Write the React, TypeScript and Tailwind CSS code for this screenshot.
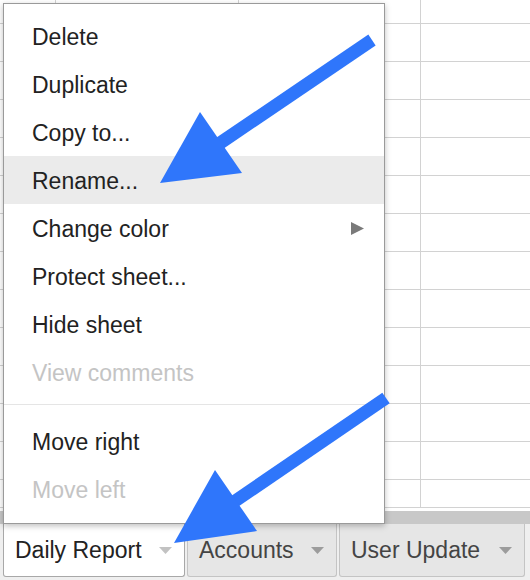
import React from "react";

type MenuItem = {
  label: string;
  disabled?: boolean;
  active?: boolean;
  submenu?: boolean;
};

const topItems: MenuItem[] = [
  { label: "Delete" },
  { label: "Duplicate" },
  { label: "Copy to..." },
  { label: "Rename...", active: true },
  { label: "Change color", submenu: true },
  { label: "Protect sheet..." },
  { label: "Hide sheet" },
  { label: "View comments", disabled: true },
];

const bottomItems: MenuItem[] = [
  { label: "Move right" },
  { label: "Move left", disabled: true },
];

// row heights of the sheet grid behind the menu
const rowHeights = [24, 38, 38, 38, 38, 38, 38, 38, 38, 38, 38, 38, 38, 28];

function Item({ item }: { item: MenuItem }) {
  return (
    <div
      className={`flex h-[48px] items-center justify-between pt-[3px] pl-[28px] pr-[20px] ${
        item.active ? "bg-[#ebebeb]" : ""
      } ${item.disabled ? "text-[#c4c4c4]" : "text-[#222222]"}`}
    >
      <span>{item.label}</span>
      {item.submenu && (
        <svg width="13" height="13" viewBox="0 0 13 13" className="-mt-[2px]">
          <polygon points="0,0 13,6.5 0,13" fill="#7a7a7a" />
        </svg>
      )}
    </div>
  );
}

function Caret({ color }: { color: string }) {
  return (
    <svg width="13" height="7" viewBox="0 0 13 7">
      <polygon points="0,0 13,0 6.5,7" fill={color} />
    </svg>
  );
}

function SheetTab({
  label,
  width,
  active,
}: {
  label: string;
  width: string;
  active?: boolean;
}) {
  return (
    <div
      className={`flex h-[53px] items-center justify-between rounded-b-[3px] border-x border-b pl-[11px] pr-[12px] ${width} ${
        active
          ? "border-[#a8a8a8] bg-white text-[#222222]"
          : "border-[#c4c4c4] bg-[#e6e6e6] text-[#444444]"
      }`}
    >
      <span>{label}</span>
      <Caret color={active ? "#c2c2c2" : "#9c9c9c"} />
    </div>
  );
}

export default function App() {
  return (
    <div className="relative h-[580px] w-[530px] overflow-hidden bg-white font-['Liberation_Sans',Arial,sans-serif] text-[23px]">
      {/* Sheet grid */}
      <div className="flex flex-col">
        {rowHeights.map((h, i) => (
          <div key={i} className="flex" style={{ height: h }}>
            <div className="w-[56px] border-r border-b border-[#d2d2d2]" />
            <div className="w-[183px] border-r border-b border-[#d2d2d2]" />
            <div className="w-[182px] border-r border-b border-[#d2d2d2]" />
            <div className="flex-1 border-b border-[#d2d2d2]" />
          </div>
        ))}
        <div className="h-[3px]" />
        <div className="h-[13px] bg-[#c8c8c8]" />

        {/* Sheet tabs */}
        <div className="flex h-[56px] gap-[2px] bg-[#efefef] pl-[3px]">
          <SheetTab label="Daily Report" width="w-[182px]" active />
          <SheetTab label="Accounts" width="w-[150px]" />
          <SheetTab label="User Update" width="w-[186px]" />
        </div>
      </div>

      {/* Context menu */}
      <div className="absolute left-[3px] top-[3px] w-[382px] border border-[#9a9a9a] bg-white pt-[8px] pb-[10px] shadow-[0_2px_6px_rgba(0,0,0,0.25)]">
        {topItems.map((item) => (
          <Item key={item.label} item={item} />
        ))}
        <div className="mt-[8px] mb-[12px] h-px bg-[#e5e5e5]" />
        {bottomItems.map((item) => (
          <Item key={item.label} item={item} />
        ))}
      </div>

      {/* Annotation arrows */}
      <svg
        className="pointer-events-none absolute inset-0"
        width="530"
        height="580"
        viewBox="0 0 530 580"
      >
        <line x1="372" y1="40" x2="215" y2="146.5" stroke="#2f76fb" strokeWidth="13" />
        <polygon points="200,112 242,173 160,183" fill="#2f76fb" />
        <line x1="386" y1="398" x2="230" y2="504.5" stroke="#2f76fb" strokeWidth="13" />
        <polygon points="215,470 257,531 174,543" fill="#2f76fb" />
      </svg>
    </div>
  );
}
